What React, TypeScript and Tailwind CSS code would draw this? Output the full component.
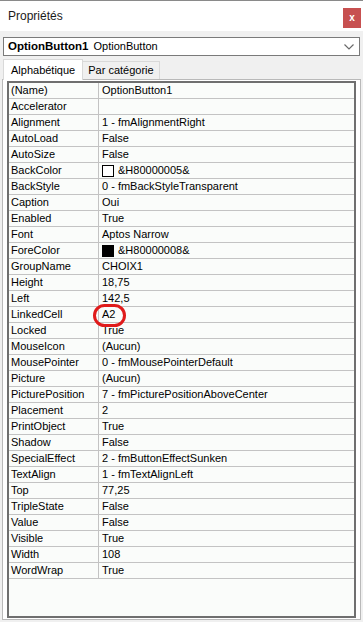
import { useState } from "react";

type Prop = { name: string; value: string; swatch?: "white" | "black" };

const props: Prop[] = [
  { name: "(Name)", value: "OptionButton1" },
  { name: "Accelerator", value: "" },
  { name: "Alignment", value: "1 - fmAlignmentRight" },
  { name: "AutoLoad", value: "False" },
  { name: "AutoSize", value: "False" },
  { name: "BackColor", value: "&H80000005&", swatch: "white" },
  { name: "BackStyle", value: "0 - fmBackStyleTransparent" },
  { name: "Caption", value: "Oui" },
  { name: "Enabled", value: "True" },
  { name: "Font", value: "Aptos Narrow" },
  { name: "ForeColor", value: "&H80000008&", swatch: "black" },
  { name: "GroupName", value: "CHOIX1" },
  { name: "Height", value: "18,75" },
  { name: "Left", value: "142,5" },
  { name: "LinkedCell", value: "A2" },
  { name: "Locked", value: "True" },
  { name: "MouseIcon", value: "(Aucun)" },
  { name: "MousePointer", value: "0 - fmMousePointerDefault" },
  { name: "Picture", value: "(Aucun)" },
  { name: "PicturePosition", value: "7 - fmPicturePositionAboveCenter" },
  { name: "Placement", value: "2" },
  { name: "PrintObject", value: "True" },
  { name: "Shadow", value: "False" },
  { name: "SpecialEffect", value: "2 - fmButtonEffectSunken" },
  { name: "TextAlign", value: "1 - fmTextAlignLeft" },
  { name: "Top", value: "77,25" },
  { name: "TripleState", value: "False" },
  { name: "Value", value: "False" },
  { name: "Visible", value: "True" },
  { name: "Width", value: "108" },
  { name: "WordWrap", value: "True" },
];

const PropRow = ({ p }: { p: Prop }) => (
  <div className="flex h-[16px] border-b border-[#c3c3c3]">
    <div className="w-[90px] shrink-0 border-r border-[#c3c3c3] pl-[2px] leading-[15px] truncate">
      {p.name}
    </div>
    <div className="flex-1 flex items-center pl-[3px] leading-[15px] whitespace-nowrap">
      {p.swatch === "white" && (
        <span className="w-[12px] h-[12px] border border-black bg-white mr-[4px]" />
      )}
      {p.swatch === "black" && (
        <span className="w-[12px] h-[12px] border border-black bg-black mr-[4px]" />
      )}
      {p.value}
    </div>
  </div>
);

export default function App() {
  const [tab, setTab] = useState("alpha");

  return (
    <div
      className="relative w-[363px] h-[622px] bg-[#f0f0f0] flex flex-col border-t border-[#8a8a8a] text-black"
      style={{ fontFamily: '"Liberation Sans", Arial, sans-serif' }}
    >
      {/* title bar */}
      <div className="h-[30px] bg-white flex items-center justify-between pl-[8px] pr-[2px]">
        <span className="text-[12px] text-[#1a1a1a]">Propriétés</span>
        <button className="w-[18px] h-[20px] mt-[3px] bg-[#c75050] text-white text-[10px] font-bold leading-none flex items-center justify-center">
          x
        </button>
      </div>

      {/* object selector */}
      <div className="mt-[6px] mx-[3px] h-[19px] border border-[#7a7a7a] bg-white flex items-center pl-[4px] pr-[5px]">
        <span className="text-[11.5px] font-bold">OptionButton1</span>
        <span className="text-[11px] ml-[5px]">OptionButton</span>
        <svg className="ml-auto" width="10" height="6" viewBox="0 0 10 6">
          <polyline points="0.5,0.5 5,5 9.5,0.5" fill="none" stroke="#6a6a6a" strokeWidth="1.2" />
        </svg>
      </div>

      {/* tabs */}
      <div className="mt-[3px] flex items-end pl-[3px] text-[11px] h-[20px]">
        <div
          onClick={() => setTab("alpha")}
          className={
            tab === "alpha"
              ? "h-[21px] px-[7px] bg-white border border-b-0 border-[#d9d9d9] flex items-center relative z-10 -mb-px"
              : "h-[18px] px-[5px] bg-[#f0f0f0] border border-b-0 border-[#d9d9d9] flex items-center"
          }
        >
          Alphabétique
        </div>
        <div
          onClick={() => setTab("cat")}
          className={
            tab === "cat"
              ? "h-[21px] px-[7px] bg-white border border-b-0 border-[#d9d9d9] flex items-center relative z-10 -mb-px"
              : "h-[18px] px-[5px] bg-[#f0f0f0] border border-b-0 border-l-0 border-[#d9d9d9] flex items-center"
          }
        >
          Par catégorie
        </div>
      </div>

      {/* panel */}
      <div className="mx-[2px] h-[541px] border border-[#b9b9b9] bg-white px-[4px] pt-[1px] pb-[1px]">
        <div className="h-full border-2 border-t-[2px] border-[#6f6f6f] bg-[#fafcfa] text-[11px]">
          {props.map((p) => (
            <PropRow key={p.name} p={p} />
          ))}
        </div>
      </div>

      {/* red mark around LinkedCell value */}
      <div className="absolute left-[93px] top-[303px] w-[33px] h-[23px] rounded-full border-[3px] border-[#e01b1b]" />
    </div>
  );
}
